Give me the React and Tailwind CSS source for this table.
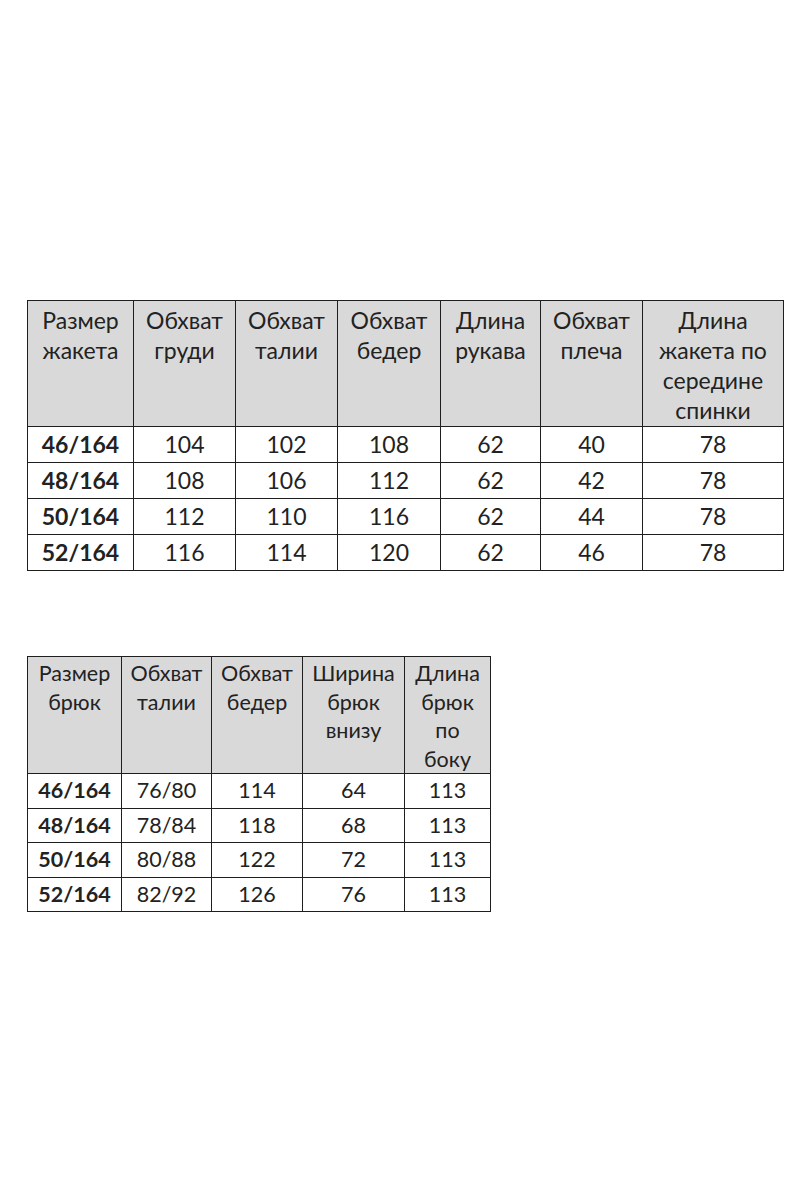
const jacketHead = [
  ["Размер", "жакета"],
  ["Обхват", "груди"],
  ["Обхват", "талии"],
  ["Обхват", "бедер"],
  ["Длина", "рукава"],
  ["Обхват", "плеча"],
  ["Длина", "жакета по", "середине", "спинки"],
];
const jacketWidths = ["w-[106px]", "w-[102px]", "w-[102px]", "w-[103px]", "w-[100px]", "w-[102px]", "w-[141px]"];
const jacketRows = [
  ["46/164", "104", "102", "108", "62", "40", "78"],
  ["48/164", "108", "106", "112", "62", "42", "78"],
  ["50/164", "112", "110", "116", "62", "44", "78"],
  ["52/164", "116", "114", "120", "62", "46", "78"],
];

const pantsHead = [
  ["Размер", "брюк"],
  ["Обхват", "талии"],
  ["Обхват", "бедер"],
  ["Ширина", "брюк", "внизу"],
  ["Длина", "брюк", "по", "боку"],
];
const pantsWidths = ["w-[94px]", "w-[90px]", "w-[91px]", "w-[102px]", "w-[86px]"];
const pantsRows = [
  ["46/164", "76/80", "114", "64", "113"],
  ["48/164", "78/84", "118", "68", "113"],
  ["50/164", "80/88", "122", "72", "113"],
  ["52/164", "82/92", "126", "76", "113"],
];

function SizeTable({ head, widths, rows, big }) {
  const cell = "border-[1.5px] border-[#1e1e1e] text-center";
  return (
    <table className={`table-fixed border-collapse ${big ? "w-[756px] text-[23px]" : "w-[463px] text-[21.5px]"}`}>
      <thead>
        <tr>
          {head.map((lines, i) => (
            <th
              key={i}
              className={`${cell} ${widths[i]} bg-[#d9d9d9] align-top font-normal ${big ? "h-[126px] pt-[4px] leading-[30px]" : "h-[116px] pt-[2px] leading-[28.5px]"}`}
            >
              {lines.map((l, j) => (
                <div key={j}>{l}</div>
              ))}
            </th>
          ))}
        </tr>
      </thead>
      <tbody>
        {rows.map((r, i) => (
          <tr key={i}>
            {r.map((v, j) => (
              <td
                key={j}
                className={`${cell} ${big ? "h-[36px]" : "h-[34.5px]"} p-0 leading-none ${j === 0 ? "font-bold" : ""}`}
              >
                {v}
              </td>
            ))}
          </tr>
        ))}
      </tbody>
    </table>
  );
}

export default function App() {
  return (
    <div className="min-h-[1200px] w-[800px] bg-white pl-[27px] pt-[300px] text-[#222] [font-family:Lato,'Liberation_Sans',sans-serif]">
      <SizeTable head={jacketHead} widths={jacketWidths} rows={jacketRows} big />
      <div className="h-[85px]" />
      <SizeTable head={pantsHead} widths={pantsWidths} rows={pantsRows} />
    </div>
  );
}
